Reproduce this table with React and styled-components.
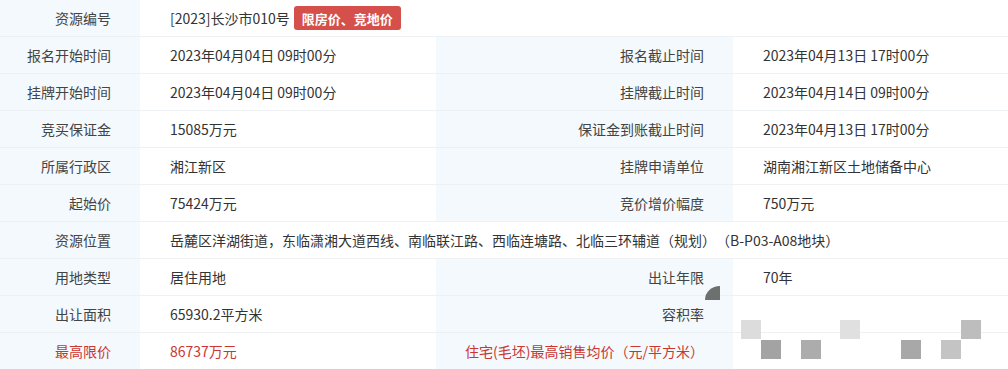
import styled, { createGlobalStyle } from "styled-components";

const GlobalStyle = createGlobalStyle`
  body {
    margin: 0;
    background: #fff;
    font-family: "Microsoft YaHei", "Noto Sans CJK SC", sans-serif;
    text-spacing-trim: space-all;
  }
`;

const rows = [
  { label: "报名开始时间", value: "2023年04月04日 09时00分", label2: "报名截止时间", value2: "2023年04月13日 17时00分" },
  { label: "挂牌开始时间", value: "2023年04月04日 09时00分", label2: "挂牌截止时间", value2: "2023年04月14日 09时00分" },
  { label: "竞买保证金", value: "15085万元", label2: "保证金到账截止时间", value2: "2023年04月13日 17时00分" },
  { label: "所属行政区", value: "湘江新区", label2: "挂牌申请单位", value2: "湖南湘江新区土地储备中心" },
  { label: "起始价", value: "75424万元", label2: "竞价增价幅度", value2: "750万元" },
];

const mosaic = [
  { x: 741, y: 320, c: "#dcdcdc" },
  { x: 761, y: 340, c: "#a3a3a3" },
  { x: 801, y: 340, c: "#acacac" },
  { x: 840, y: 320, c: "#e0e0e0" },
  { x: 901, y: 340, c: "#a8a8a8" },
  { x: 941, y: 340, c: "#c4c4c4" },
  { x: 961, y: 320, c: "#bdbdbd" },
];

const App = () => {
  return (
    <>
      <GlobalStyle />
      <Table>
        <Row>
          <Label>资源编号</Label>
          <Value $span>
            [2023]长沙市010号
            <Badge>限房价、竞地价</Badge>
          </Value>
        </Row>

        {rows.map((r) => (
          <Row key={r.label}>
            <Label>{r.label}</Label>
            <Value>{r.value}</Value>
            <Label>{r.label2}</Label>
            <Value>{r.value2}</Value>
          </Row>
        ))}

        <Row>
          <Label>资源位置</Label>
          <Value $span>
            岳麓区洋湖街道，东临潇湘大道西线、南临联江路、西临连塘路、北临三环辅道（规划）（B-P03-A08地块）
          </Value>
        </Row>
        <Row>
          <Label>用地类型</Label>
          <Value>居住用地</Value>
          <Label>出让年限</Label>
          <Value>70年</Value>
        </Row>
        <Row>
          <Label>出让面积</Label>
          <Value>65930.2平方米</Value>
          <Label>容积率</Label>
          <Value />
        </Row>
        <Row>
          <Label $red>最高限价</Label>
          <Value $red>86737万元</Value>
          <Label $red>住宅(毛坯)最高销售均价（元/平方米）</Label>
          <Value />
        </Row>

        <Corner />
        {mosaic.map((m, i) => (
          <Tile key={i} style={{ left: m.x, top: m.y, background: m.c }} />
        ))}
      </Table>
    </>
  );
};

const Table = styled.div`
  position: relative;
  width: 1008px;
  font-size: 14px;
  color: #333;
  overflow: hidden;
`;

const Row = styled.div`
  display: grid;
  grid-template-columns: 140px 296px 297px 1fr;
  height: 36px;
  border-bottom: 1px solid #eef1f3;
`;

const Label = styled.div`
  display: flex;
  align-items: center;
  justify-content: flex-end;
  padding-right: 29px;
  background: #f3f9fc;
  color: ${(p) => (p.$red ? "#cc3630" : "#444")};
  white-space: nowrap;
`;

const Value = styled.div`
  display: flex;
  align-items: center;
  padding-left: 30px;
  color: ${(p) => (p.$red ? "#cc3630" : "#333")};
  grid-column: ${(p) => (p.$span ? "span 3" : "auto")};
  white-space: nowrap;
`;

const Badge = styled.span`
  margin-left: 4px;
  height: 24px;
  padding: 0 8px;
  display: inline-flex;
  align-items: center;
  background: #d6504b;
  color: #fff;
  font-size: 13px;
  font-weight: bold;
  border-radius: 3px;
`;

const Corner = styled.div`
  position: absolute;
  left: 705px;
  top: 286px;
  width: 15px;
  height: 14px;
  background: #6c706e;
  border-top-left-radius: 100% 100%;
`;

const Tile = styled.div`
  position: absolute;
  width: 20px;
  height: 19px;
  filter: blur(0.6px);
`;

export default App;
